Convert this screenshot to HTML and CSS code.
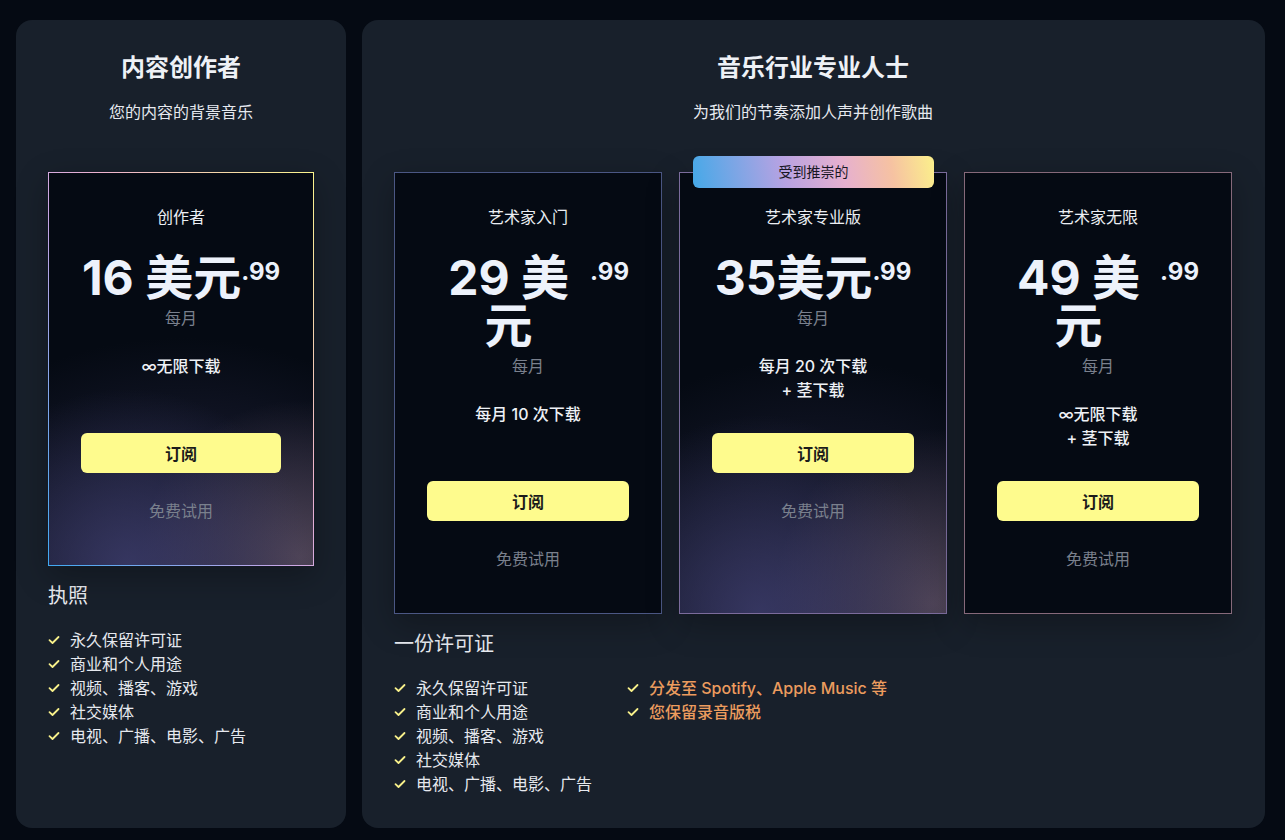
FILE: index.html
```html
<!DOCTYPE html>
<html lang="zh-CN">
<head>
<meta charset="utf-8">
<title>定价</title>
<link rel="stylesheet" href="styles.css">
</head>
<body>
<div class="page">
  <section class="panel panel-creator">
    <header class="panel-head">
      <h2 class="panel-title">内容创作者</h2>
      <p class="panel-sub">您的内容的背景音乐</p>
    </header>
    <div class="plans">
      <article class="plan plan-rainbow plan-glow">
        <div class="plan-name">创作者</div>
        <div class="price"><span class="amount">16 美元</span><span class="cents">.99</span></div>
        <div class="per">每月</div>
        <div class="features"><div>∞无限下载</div></div>
        <button class="btn">订阅</button>
        <div class="trial">免费试用</div>
      </article>
    </div>
    <div class="license">
      <h3 class="license-title">执照</h3>
      <div class="license-cols">
        <ul class="checks">
          <li><svg viewBox="0 0 12 10"><path d="M1.5 5.2 4.5 8 10.5 2"/></svg>永久保留许可证</li>
          <li><svg viewBox="0 0 12 10"><path d="M1.5 5.2 4.5 8 10.5 2"/></svg>商业和个人用途</li>
          <li><svg viewBox="0 0 12 10"><path d="M1.5 5.2 4.5 8 10.5 2"/></svg>视频、播客、游戏</li>
          <li><svg viewBox="0 0 12 10"><path d="M1.5 5.2 4.5 8 10.5 2"/></svg>社交媒体</li>
          <li><svg viewBox="0 0 12 10"><path d="M1.5 5.2 4.5 8 10.5 2"/></svg>电视、广播、电影、广告</li>
        </ul>
      </div>
    </div>
  </section>

  <section class="panel panel-pro">
    <header class="panel-head">
      <h2 class="panel-title">音乐行业专业人士</h2>
      <p class="panel-sub">为我们的节奏添加人声并创作歌曲</p>
    </header>
    <div class="plans plans-row">
      <article class="plan plan-blue">
        <div class="plan-name">艺术家入门</div>
        <div class="price"><span class="amount">29 美元</span><span class="cents">.99</span></div>
        <div class="per">每月</div>
        <div class="features"><div>每月 10 次下载</div></div>
        <button class="btn">订阅</button>
        <div class="trial">免费试用</div>
      </article>
      <article class="plan plan-purple plan-glow">
        <div class="badge">受到推崇的</div>
        <div class="plan-name">艺术家专业版</div>
        <div class="price"><span class="amount">35美元</span><span class="cents">.99</span></div>
        <div class="per">每月</div>
        <div class="features"><div>每月 20 次下载</div><div>+ 茎下载</div></div>
        <button class="btn">订阅</button>
        <div class="trial">免费试用</div>
      </article>
      <article class="plan plan-rose">
        <div class="plan-name">艺术家无限</div>
        <div class="price"><span class="amount">49 美元</span><span class="cents">.99</span></div>
        <div class="per">每月</div>
        <div class="features"><div>∞无限下载</div><div>+ 茎下载</div></div>
        <button class="btn">订阅</button>
        <div class="trial">免费试用</div>
      </article>
    </div>
    <div class="license">
      <h3 class="license-title">一份许可证</h3>
      <div class="license-cols">
        <ul class="checks">
          <li><svg viewBox="0 0 12 10"><path d="M1.5 5.2 4.5 8 10.5 2"/></svg>永久保留许可证</li>
          <li><svg viewBox="0 0 12 10"><path d="M1.5 5.2 4.5 8 10.5 2"/></svg>商业和个人用途</li>
          <li><svg viewBox="0 0 12 10"><path d="M1.5 5.2 4.5 8 10.5 2"/></svg>视频、播客、游戏</li>
          <li><svg viewBox="0 0 12 10"><path d="M1.5 5.2 4.5 8 10.5 2"/></svg>社交媒体</li>
          <li><svg viewBox="0 0 12 10"><path d="M1.5 5.2 4.5 8 10.5 2"/></svg>电视、广播、电影、广告</li>
        </ul>
        <ul class="checks checks-accent">
          <li><svg viewBox="0 0 12 10"><path d="M1.5 5.2 4.5 8 10.5 2"/></svg>分发至 Spotify、Apple Music 等</li>
          <li><svg viewBox="0 0 12 10"><path d="M1.5 5.2 4.5 8 10.5 2"/></svg>您保留录音版税</li>
        </ul>
      </div>
    </div>
  </section>
</div>
</body>
</html>
```
FILE: styles.css
```css
* { box-sizing: border-box; }

html, body {
  margin: 0;
  padding: 0;
  background: #050a13;
}

body {
  font-family: Inter, "Noto Sans CJK SC", "Noto Sans", sans-serif;
  color: #e8ebf1;
  font-size: 16px;
}

.page {
  display: flex;
  align-items: stretch;
  gap: 16px;
  padding: 20px 20px 12px 16px;
}

.panel {
  background: #18202b;
  border-radius: 16px;
  padding: 32px;
  display: flex;
  flex-direction: column;
}

.panel-creator { width: 330px; flex: none; }
.panel-pro { flex: 1; padding-right: 33px; }

.panel-head { text-align: center; }

.panel-title {
  margin: 0;
  font-size: 24px;
  line-height: 32px;
  font-weight: 700;
  color: #eef1f6;
}

.panel-sub {
  margin: 17px 0 0;
  font-size: 16px;
  line-height: 22px;
  color: #e6e9ef;
}

.plans {
  margin-top: 49px;
  display: flex;
}

.plans-row { gap: 17px; }

.plans-row .plan { flex: 1 1 0; }

.plan {
  position: relative;
  width: 100%;
  border: 1px solid #4a5580;
  background: #050a13;
  padding: 33px 32px 43px;
  text-align: center;
  display: flex;
  flex-direction: column;
  align-items: stretch;
  box-shadow: 0 10px 30px rgba(0, 0, 0, 0.28);
}

.plan-blue { border-color: #4b5784; }
.plan-purple { border-color: #7b6c9c; }
.plan-rose { border-color: #86697a; }

.plan-glow {
  background:
    radial-gradient(ellipse 70% 45% at 30% 100%, rgba(62, 62, 110, 0.75), rgba(62, 62, 110, 0) 100%),
    radial-gradient(ellipse 60% 40% at 95% 98%, rgba(92, 78, 96, 0.8), rgba(92, 78, 96, 0) 100%),
    radial-gradient(ellipse 110% 58% at 50% 100%, rgba(40, 40, 70, 0.85), rgba(40, 40, 70, 0) 100%),
    #050a13;
}

.plan-rainbow {
  border: 1px solid transparent;
  background:
    radial-gradient(ellipse 70% 45% at 30% 100%, rgba(62, 62, 110, 0.75), rgba(62, 62, 110, 0) 100%) padding-box,
    radial-gradient(ellipse 60% 40% at 95% 98%, rgba(92, 78, 96, 0.8), rgba(92, 78, 96, 0) 100%) padding-box,
    radial-gradient(ellipse 110% 58% at 50% 100%, rgba(40, 40, 70, 0.85), rgba(40, 40, 70, 0) 100%) padding-box,
    linear-gradient(#050a13, #050a13) padding-box,
    linear-gradient(to top right, #3fa9f2 0%, #c9a6e6 45%, #eeb2cf 60%, #fbf48b 100%) border-box;
}

.badge {
  position: absolute;
  top: -17px;
  left: 13px;
  right: 12px;
  height: 32px;
  line-height: 32px;
  border-radius: 6px;
  font-size: 14px;
  color: #171724;
  background: linear-gradient(80deg, #45a9e8 0%, #b7a2e2 38%, #e6b0cf 62%, #f6c2a2 82%, #fbf08b 100%);
}

.plan-name {
  font-size: 16px;
  line-height: 22px;
  color: #eceff4;
}

.price {
  margin-top: 26px;
  display: flex;
  justify-content: center;
  align-items: flex-start;
  color: #edf2fb;
  font-weight: 700;
}

.amount {
  flex: 0 1 auto;
  min-width: 0;
  font-size: 48px;
  line-height: 48px;
  text-align: center;
}

.cents {
  flex: none;
  font-size: 24px;
  line-height: 24px;
  padding-top: 6px;
}

.per {
  margin-top: 5px;
  font-size: 16px;
  line-height: 22px;
  color: #7a808d;
}

.features {
  margin-top: 25px;
  min-height: 48px;
  font-size: 16px;
  line-height: 24px;
  font-weight: 500;
  color: #eef1f6;
}

.btn {
  margin-top: 31px;
  height: 40px;
  border: 0;
  border-radius: 6px;
  background: #fefb8d;
  color: #1b1b1b;
  font-family: inherit;
  font-size: 16px;
  font-weight: 700;
  cursor: pointer;
}

.trial {
  margin-top: 27px;
  font-size: 16px;
  line-height: 22px;
  color: #7a808d;
}

.license { margin-top: 17px; }

.license-title {
  margin: 0;
  font-size: 20px;
  line-height: 27px;
  font-weight: 400;
  color: #e8ebf1;
}

.license-cols {
  margin-top: 18px;
  display: flex;
  gap: 35px;
}

.checks {
  list-style: none;
  margin: 0;
  padding: 0;
}

.checks li {
  display: flex;
  align-items: center;
  gap: 10px;
  font-size: 16px;
  line-height: 24px;
  color: #e6e9ef;
  white-space: nowrap;
}

.checks svg {
  width: 12px;
  height: 10px;
  flex: none;
  fill: none;
  stroke: #f7f08a;
  stroke-width: 1.8;
  stroke-linecap: round;
  stroke-linejoin: round;
}

.checks-accent li {
  color: #ec9c5e;
  font-weight: 500;
}
```
